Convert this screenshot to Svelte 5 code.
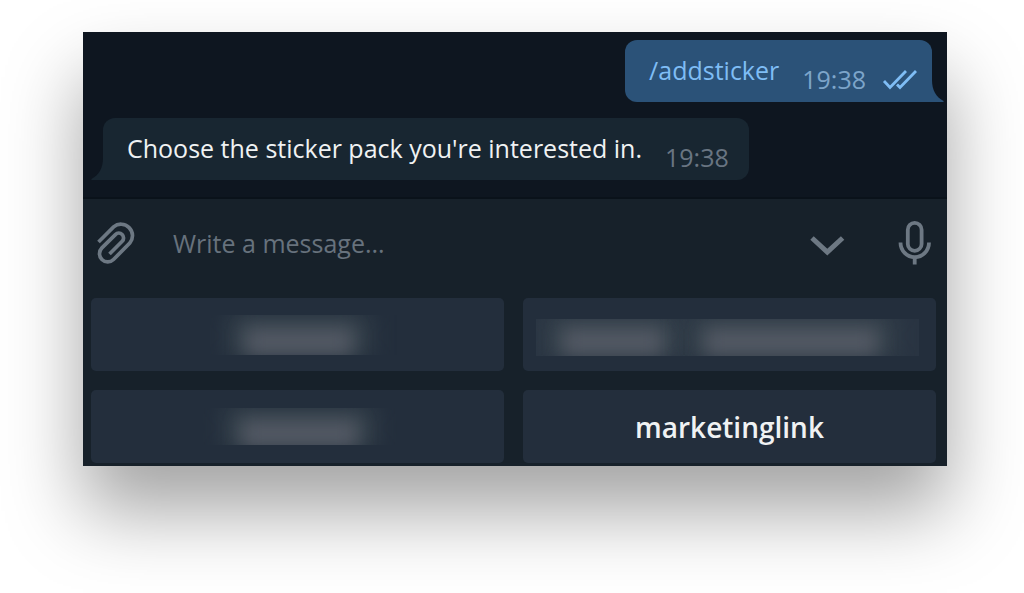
<script>
	let message = $state('');

	const messages = [
		{ text: '/addsticker', time: '19:38', out: true },
		{ text: "Choose the sticker pack you're interested in.", time: '19:38', out: false },
	];

	// packs without a title are shown smudged
	const packs = [
		{
			id: 1,
			label: 'First pack',
			area: { x: 119, y: 17, w: 195, h: 40 },
			smudges: [{ x: 155, w: 106 }],
			haze: 0
		},
		{
			id: 2,
			label: 'Second pack',
			area: { x: 13, y: 21, w: 383, h: 37 },
			smudges: [{ x: 40, w: 100 }, { x: 182, w: 172 }],
			haze: 0.03
		},
		{
			id: 3,
			label: 'Third pack',
			area: { x: 112, y: 18, w: 194, h: 37 },
			smudges: [{ x: 151, w: 115 }],
			haze: 0
		},
		{ id: 4, title: 'marketinglink' },
	];
</script>

<main>
	<div class="window">
		<section class="chat">
			{#each messages as m}
				<div class="bubble" class:out={m.out}>
					<span class="text">
						{#if m.out}
							<a href="#addsticker">{m.text}</a>
						{:else}
							{m.text}
						{/if}
					</span>
					<span class="time">{m.time}</span>
					{#if m.out}
						<svg class="ticks" width="36" height="24" viewBox="0 0 36 24">
							<path d="M2 13L8 19.5L24 3M15 16.5L18 19.5L34 3" />
						</svg>
					{/if}
					<svg class="tail" width="12" height="22" viewBox="0 0 12 22">
						<path d="M0 0C0 10 4 17 11.5 21V22H0Z" />
					</svg>
				</div>
			{/each}
		</section>

		<form class="composer" onsubmit={(e) => e.preventDefault()}>
			<button type="button" class="icon" aria-label="Attach file">
				<svg width="40" height="44" viewBox="0 0 40 44">
					<path
						d="M2.5 21L17.6 5.9A11.5 11.5 0 0 1 33.8 22.1L17.5 38.5A8.2 8.2 0 0 1 5.9 26.9L19.4 13.6A4.7 4.7 0 0 1 26.2 20.3L13.5 33"
						stroke-width="3.7"
					/>
				</svg>
			</button>
			<input
				type="text"
				aria-label="Message"
				placeholder="Write a message..."
				bind:value={message}
			/>
			<button type="button" class="icon" aria-label="Hide keyboard">
				<svg width="40" height="44" viewBox="0 0 40 44">
					<path d="M4 17L19.3 31L34.6 17" stroke-width="5" />
				</svg>
			</button>
			<button type="button" class="icon mic" aria-label="Record voice message">
				<svg width="34" height="46" viewBox="0 0 34 46">
					<rect x="9.8" y="2.8" width="13.8" height="28" rx="6.9" stroke-width="3.8" />
					<path d="M2.5 22.5A14.2 14.7 0 0 0 31 22.5M16.7 37V44.5" stroke-width="3.8" />
				</svg>
			</button>
		</form>

		<section class="keyboard">
			{#each packs as pack (pack.id)}
				<button type="button" class="key" aria-label={pack.title ?? pack.label}>
					{#if pack.title}
						{pack.title}
					{:else}
						<svg class="smudge" viewBox="0 0 413 73" preserveAspectRatio="none">
							<clipPath id="area-{pack.id}">
								<rect x={pack.area.x} y={pack.area.y} width={pack.area.w} height={pack.area.h} />
							</clipPath>
							<g clip-path="url(#area-{pack.id})">
								<rect
									x={pack.area.x}
									y={pack.area.y}
									width={pack.area.w}
									height={pack.area.h}
									fill="#ffffff"
									fill-opacity={pack.haze}
								/>
								{#each pack.smudges as s}
									<rect class="glow" x={s.x - 16} y="16" width={s.w + 32} height="44" />
									<rect class="core" x={s.x} y="31" width={s.w} height="26" />
								{/each}
							</g>
						</svg>
					{/if}
				</button>
			{/each}
		</section>
	</div>
</main>

<style>
	:global(body) {
		margin: 0;
		background: #ffffff;
	}

	main {
		padding: 32px 77px 127px 83px;
		overflow: hidden;
		font-family: "Open Sans", "Noto Sans", sans-serif;
		font-size: 25px;
	}

	.window {
		background: #17212a;
		box-shadow: 0 45px 72px rgba(0, 0, 0, 0.36);
	}

	.chat {
		display: flex;
		flex-direction: column;
		align-items: flex-start;
		gap: 16px;
		padding: 8px 15px 17px 20px;
		background: #0e1620;
		border-bottom: 2px solid #0a121a;
	}

	.bubble {
		position: relative;
		display: flex;
		gap: 23px;
		padding: 0 20px 2px 24px;
		border-radius: 12px 12px 12px 0;
		background: #182631;
		color: #f0f2f3;
		line-height: 60px;
	}
	.bubble.out {
		align-self: flex-end;
		padding-right: 14px;
		border-radius: 12px 12px 0 12px;
		background: #2b5278;
	}
	.bubble a {
		color: #7fbdf5;
		text-decoration: none;
	}

	.time {
		align-self: flex-end;
		line-height: 42px;
		color: #697582;
	}
	.out .time {
		color: #7da5ca;
	}

	.ticks {
		align-self: flex-end;
		margin: 0 0 8px -7px;
		fill: none;
		stroke: #7fbdf5;
		stroke-width: 2.8;
	}

	.tail {
		position: absolute;
		bottom: 0;
		left: -12px;
		fill: #182631;
		transform: scaleX(-1);
	}
	.out .tail {
		left: auto;
		right: -12px;
		fill: #2b5278;
		transform: none;
	}

	.composer {
		display: flex;
		align-items: center;
		height: 88px;
		padding: 0 15px 0 13px;
	}
	.composer input {
		flex: 1;
		min-width: 0;
		margin: 0 36px 0 37px;
		padding: 0;
		border: 0;
		outline: 0;
		background: none;
		color: #f0f2f3;
		font: inherit;
	}
	.composer input::placeholder {
		color: #67727d;
		opacity: 1;
	}

	.icon {
		display: flex;
		padding: 0;
		border: 0;
		background: none;
		cursor: pointer;
	}
	.icon svg {
		fill: none;
		stroke: #6d7883;
	}
	.mic {
		margin-left: 50px;
	}

	.keyboard {
		display: grid;
		grid-template-columns: 1fr 1fr;
		gap: 19px;
		padding: 11px 11px 3px 8px;
	}
	.key {
		height: 73px;
		padding: 0;
		border: 0;
		border-radius: 5px;
		background: #232e3c;
		color: #f0f2f3;
		font: inherit;
		font-size: 28px;
		font-weight: 600;
		cursor: pointer;
	}

	.smudge {
		display: block;
		width: 100%;
		height: 100%;
	}
	.glow {
		fill: #37434d;
		filter: blur(12px);
	}
	.core {
		fill: #535964;
		filter: blur(9px);
	}
</style>
